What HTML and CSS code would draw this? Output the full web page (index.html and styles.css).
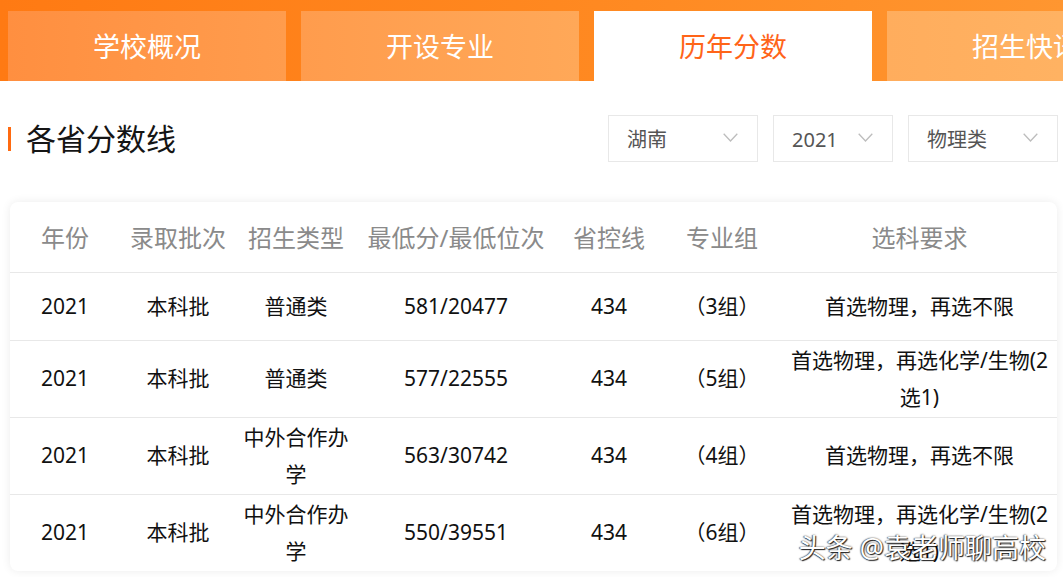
FILE: index.html
```html
<!DOCTYPE html>
<html lang="zh-CN">
<head>
<meta charset="utf-8">
<title>历年分数</title>
<link rel="stylesheet" href="styles.css">
</head>
<body>
<div class="page">
  <nav class="tabs">
    <div class="tab tab-1">学校概况</div>
    <div class="tab tab-2">开设专业</div>
    <div class="tab tab-active">历年分数</div>
    <div class="tab tab-4">招生快讯</div>
  </nav>

  <section class="toolbar">
    <h2 class="title">各省分数线</h2>
    <div class="filters">
      <div class="select select-wide"><span>湖南</span><svg class="chev" viewBox="0 0 15 9" width="15" height="9"><path d="M0.7 0.7 L7.5 8 L14.3 0.7" fill="none" stroke="#bdbdbd" stroke-width="1.3"/></svg></div>
      <div class="select select-narrow"><span>2021</span><svg class="chev" viewBox="0 0 15 9" width="15" height="9"><path d="M0.7 0.7 L7.5 8 L14.3 0.7" fill="none" stroke="#bdbdbd" stroke-width="1.3"/></svg></div>
      <div class="select select-wide"><span>物理类</span><svg class="chev" viewBox="0 0 15 9" width="15" height="9"><path d="M0.7 0.7 L7.5 8 L14.3 0.7" fill="none" stroke="#bdbdbd" stroke-width="1.3"/></svg></div>
    </div>
  </section>

  <div class="card">
    <table class="scores">
      <colgroup>
        <col class="c1"><col class="c2"><col class="c3"><col class="c4"><col class="c5"><col class="c6"><col class="c7">
      </colgroup>
      <thead>
        <tr><th>年份</th><th>录取批次</th><th>招生类型</th><th>最低分/最低位次</th><th>省控线</th><th>专业组</th><th>选科要求</th></tr>
      </thead>
      <tbody>
        <tr><td>2021</td><td>本科批</td><td>普通类</td><td>581/20477</td><td>434</td><td>（3组）</td><td>首选物理，再选不限</td></tr>
        <tr><td>2021</td><td>本科批</td><td>普通类</td><td>577/22555</td><td>434</td><td>（5组）</td><td>首选物理，再选化学/生物(2选1)</td></tr>
        <tr><td>2021</td><td>本科批</td><td>中外合作办学</td><td>563/30742</td><td>434</td><td>（4组）</td><td>首选物理，再选不限</td></tr>
        <tr><td>2021</td><td>本科批</td><td>中外合作办学</td><td>550/39551</td><td>434</td><td>（6组）</td><td>首选物理，再选化学/生物(2选1)</td></tr>
      </tbody>
    </table>
  </div>

  <div class="watermark">头条 @袁老师聊高校</div>
</div>
</body>
</html>
```

FILE: styles.css
```css
* { box-sizing: border-box; }

html, body {
  margin: 0;
  padding: 0;
  background: #ffffff;
}

body {
  font-family: "Noto Sans", "Noto Sans CJK SC", sans-serif;
  color: #111;
  overflow: hidden;
}

.page {
  position: relative;
  width: 1063px;
  height: 577px;
  overflow: hidden;
}

/* ---------- tabs ---------- */
.tabs {
  display: flex;
  gap: 15px;
  padding: 11px 0 0 8px;
  height: 81px;
  background: linear-gradient(90deg, #ff7a13 0%, #ff8a22 60%, #ff9630 100%);
  overflow: hidden;
}

.tab {
  flex: 0 0 278px;
  height: 70px;
  display: flex;
  align-items: center;
  justify-content: center;
  font-size: 27px;
  color: #fff;
  line-height: 1;
}

.tab-1 { background: linear-gradient(90deg, #ff8f40, #ff9c4d); }
.tab-2 { background: linear-gradient(90deg, #ff9c4d, #ffa858); }
.tab-4 { background: linear-gradient(90deg, #ffad5d, #ffb565); }

.tab-active {
  background: #ffffff;
  color: #ff6418;
}

/* ---------- toolbar ---------- */
.toolbar {
  display: flex;
  align-items: center;
  justify-content: space-between;
  padding: 34px 5px 40px 8px;
}

.title {
  display: flex;
  align-items: center;
  margin: 0;
  font-size: 30px;
  font-weight: 400;
  line-height: 40px;
  color: #151515;
}

.title::before {
  content: "";
  width: 3px;
  height: 24px;
  margin-right: 15px;
  background: #ff6a10;
}

.filters {
  display: flex;
  gap: 15px;
}

.select {
  height: 47px;
  display: flex;
  align-items: center;
  justify-content: space-between;
  padding: 0 19px 0 18px;
  border: 1px solid #e8e8e8;
  background: #fff;
  font-size: 20px;
  color: #555;
}

.select span { line-height: 1; padding-top: 3px; }

.select-wide { width: 150px; }
.select-narrow { width: 120px; }

.chev { display: block; margin-top: -2px; }

/* ---------- card / table ---------- */
.card {
  margin: 0 6px 0 10px;
  background: #fff;
  border-radius: 8px;
  box-shadow: 0 0 10px rgba(0, 0, 0, 0.08);
  overflow: hidden;
}

.scores {
  width: 100%;
  border-collapse: collapse;
  table-layout: fixed;
}

.c1 { width: 110px; }
.c2 { width: 116px; }
.c3 { width: 120px; }
.c4 { width: 200px; }
.c5 { width: 106px; }
.c6 { width: 120px; }
.c7 { width: 275px; }

.scores th {
  height: 70px;
  padding: 0 4px;
  font-size: 24px;
  font-weight: 400;
  color: #8a8a8a;
  text-align: center;
  white-space: nowrap;
  border-bottom: 1px solid #e8e8e8;
}

.scores td {
  height: 68px;
  padding: 1px 6px;
  font-size: 21px;
  line-height: 37px;
  color: #111;
  text-align: center;
  vertical-align: middle;
}

.scores tbody tr + tr td {
  border-top: 1px solid #e8e8e8;
}

/* ---------- watermark ---------- */
.watermark {
  position: absolute;
  right: 17px;
  bottom: 13px;
  font-size: 27px;
  line-height: 32px;
  color: #ffffff;
  text-shadow: 1px 1px 1px rgba(0, 0, 0, 0.85), -1px 0 1px rgba(0, 0, 0, 0.5), 0 0 2px rgba(0, 0, 0, 0.6);
}
```
